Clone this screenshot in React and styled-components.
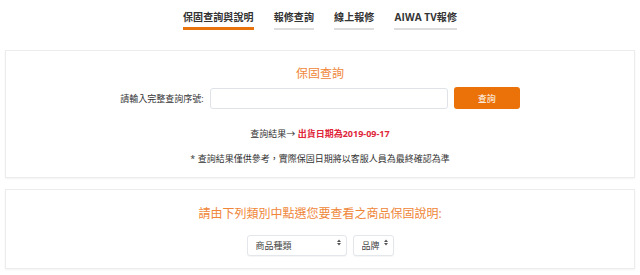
import React from 'react';
import styled, { createGlobalStyle } from 'styled-components';

const GlobalStyle = createGlobalStyle`
  body {
    margin: 0;
    background: #fff;
    font-family: "Open Sans", "Noto Sans CJK TC", sans-serif;
    color: #333;
  }
`;

const Page = styled.div`
  width: 640px;
  padding: 0 5px;
  box-sizing: border-box;
`;

const Tabs = styled.nav`
  display: flex;
  justify-content: center;
  gap: 20px;
  padding-top: 10px;
  margin-bottom: 20px;
`;

const Tab = styled.a`
  font-size: 10px;
  font-weight: 700;
  line-height: 14px;
  letter-spacing: 0.1px;
  color: #333;
  text-decoration: none;
  padding-bottom: ${p => (p.$active ? '3px' : '4px')};
  border-bottom: ${p => (p.$active ? '3px solid #e8720c' : '2px solid #ddd')};
`;

const Card = styled.section`
  border: 1px solid #ececec;
  box-shadow: 0 1px 2px rgba(0, 0, 0, 0.05);
  background: #fff;
  display: flex;
  flex-direction: column;
  align-items: center;
  padding: ${p => p.$pad};
  margin-bottom: 11px;
`;

const Title = styled.h3`
  margin: 0;
  font-size: 12px;
  line-height: 16px;
  font-weight: 400;
  color: #ef8638;
`;

const Row = styled.div`
  display: flex;
  align-items: center;
  gap: 6px;
  margin-top: ${p => p.$top || '0'};
`;

const Label = styled.label`
  font-size: 9px;
  color: #333;
`;

const Input = styled.input`
  width: 238px;
  height: 21px;
  box-sizing: border-box;
  border: 1px solid #dfe3e8;
  border-radius: 3px;
  outline: none;
`;

const Button = styled.button`
  width: 66px;
  height: 22px;
  border: none;
  border-radius: 3px;
  background: #ea7208;
  color: #fff;
  font-family: inherit;
  font-size: 9px;
`;

const Line = styled.p`
  margin: ${p => p.$top} 0 0;
  font-size: 9px;
  line-height: 14px;
  color: #333;
`;

const Red = styled.strong`
  color: #e0263a;
  font-weight: 700;
`;

const SelectWrap = styled.div`
  position: relative;
  width: ${p => p.$w}px;
`;

const Select = styled.select`
  appearance: none;
  width: 100%;
  height: 21px;
  box-sizing: border-box;
  border: 1px solid #e3e6ea;
  border-radius: 3px;
  background: #fff;
  font-family: inherit;
  font-size: 9px;
  color: #444;
  padding: 0 0 0 8px;
  box-shadow: 0 1px 1px rgba(0, 0, 0, 0.04);
`;

const Arrow = styled.svg`
  position: absolute;
  right: 6px;
  top: 7px;
  pointer-events: none;
`;

const Caret = () => (
  <Arrow width="4" height="7" viewBox="0 0 4 7">
    <path d="M0 3L2 0.5L4 3Z M0 4L2 6.5L4 4Z" fill="#555" />
  </Arrow>
);

export default function App() {
  return (
    <Page>
      <GlobalStyle />
      <Tabs>
        <Tab href="#" $active>保固查詢與說明</Tab>
        <Tab href="#">報修查詢</Tab>
        <Tab href="#">線上報修</Tab>
        <Tab href="#">AIWA TV報修</Tab>
      </Tabs>

      <Card $pad="15px 0 11px">
        <Title>保固查詢</Title>
        <Row $top="5px">
          <Label>請輸入完整查詢序號:</Label>
          <Input />
          <Button>查詢</Button>
        </Row>
        <Line $top="18px">
          查詢結果→ <Red>出貨日期為2019-09-17</Red>
        </Line>
        <Line $top="11px">* 查詢結果僅供參考，實際保固日期將以客服人員為最終確認為準</Line>
      </Card>

      <Card $pad="16px 0 12px">
        <Title>請由下列類別中點選您要查看之商品保固說明:</Title>
        <Row $top="10px">
          <SelectWrap $w={100}>
            <Select defaultValue="">
              <option value="">商品種類</option>
            </Select>
            <Caret />
          </SelectWrap>
          <SelectWrap $w={41}>
            <Select defaultValue="">
              <option value="">品牌</option>
            </Select>
            <Caret />
          </SelectWrap>
        </Row>
      </Card>
    </Page>
  );
}
